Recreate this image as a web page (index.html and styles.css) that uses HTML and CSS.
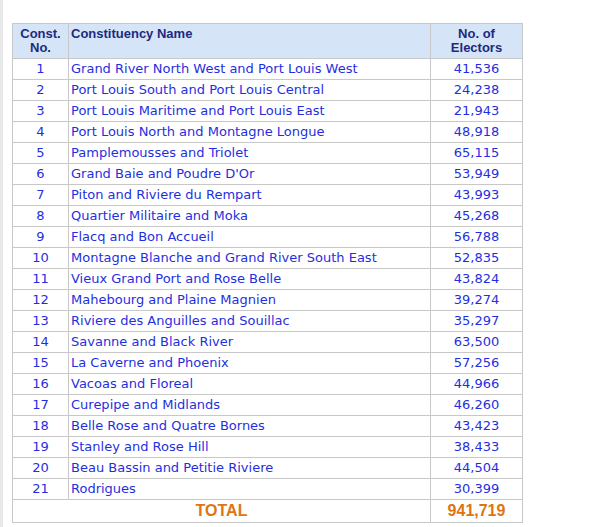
FILE: index.html
```html
<!DOCTYPE html>
<html>
<head>
<meta charset="utf-8">
<link rel="stylesheet" href="styles.css">
</head>
<body>
<div class="page">
<table class="tbl">
<thead>
<tr><th class="c1">Const.<br>No.</th><th class="c2">Constituency Name</th><th class="c3">No. of<br>Electors</th></tr>
</thead>
<tbody>
<tr><td class="n">1</td><td class="nm">Grand River North West and Port Louis West</td><td class="v">41,536</td></tr>
<tr><td class="n">2</td><td class="nm">Port Louis South and Port Louis Central</td><td class="v">24,238</td></tr>
<tr><td class="n">3</td><td class="nm">Port Louis Maritime and Port Louis East</td><td class="v">21,943</td></tr>
<tr><td class="n">4</td><td class="nm">Port Louis North and Montagne Longue</td><td class="v">48,918</td></tr>
<tr><td class="n">5</td><td class="nm">Pamplemousses and Triolet</td><td class="v">65,115</td></tr>
<tr><td class="n">6</td><td class="nm">Grand Baie and Poudre D'Or</td><td class="v">53,949</td></tr>
<tr><td class="n">7</td><td class="nm">Piton and Riviere du Rempart</td><td class="v">43,993</td></tr>
<tr><td class="n">8</td><td class="nm">Quartier Militaire and Moka</td><td class="v">45,268</td></tr>
<tr><td class="n">9</td><td class="nm">Flacq and Bon Accueil</td><td class="v">56,788</td></tr>
<tr><td class="n">10</td><td class="nm">Montagne Blanche and Grand River South East</td><td class="v">52,835</td></tr>
<tr><td class="n">11</td><td class="nm">Vieux Grand Port and Rose Belle</td><td class="v">43,824</td></tr>
<tr><td class="n">12</td><td class="nm">Mahebourg and Plaine Magnien</td><td class="v">39,274</td></tr>
<tr><td class="n">13</td><td class="nm">Riviere des Anguilles and Souillac</td><td class="v">35,297</td></tr>
<tr><td class="n">14</td><td class="nm">Savanne and Black River</td><td class="v">63,500</td></tr>
<tr><td class="n">15</td><td class="nm">La Caverne and Phoenix</td><td class="v">57,256</td></tr>
<tr><td class="n">16</td><td class="nm">Vacoas and Floreal</td><td class="v">44,966</td></tr>
<tr><td class="n">17</td><td class="nm">Curepipe and Midlands</td><td class="v">46,260</td></tr>
<tr><td class="n">18</td><td class="nm">Belle Rose and Quatre Bornes</td><td class="v">43,423</td></tr>
<tr><td class="n">19</td><td class="nm">Stanley and Rose Hill</td><td class="v">38,433</td></tr>
<tr><td class="n">20</td><td class="nm">Beau Bassin and Petitie Riviere</td><td class="v">44,504</td></tr>
<tr><td class="n">21</td><td class="nm">Rodrigues</td><td class="v">30,399</td></tr>
<tr class="total"><td colspan="2">TOTAL</td><td>941,719</td></tr>
</tbody>
</table>
</div>
</body>
</html>
```
FILE: styles.css
```css
html, body {
  margin: 0;
  padding: 0;
  background: #ffffff;
}
.page {
  border-left: 3px solid #e8e8e8;
  min-height: 527px;
  box-sizing: border-box;
  padding: 23px 0 0 9px;
}
.tbl {
  border-collapse: collapse;
  width: 510px;
  table-layout: fixed;
}
.tbl th, .tbl td {
  border: 1px solid #c8c8c8;
  padding: 0 2px;
}
.tbl th {
  background: #d6e4f7;
  color: #1c2a80;
  font-family: "Liberation Sans", Arial, sans-serif;
  font-weight: bold;
  font-size: 13px;
  line-height: 14px;
  height: 35px;
  vertical-align: top;
  padding-top: 3px;
  padding-bottom: 2px;
  box-sizing: border-box;
}
.tbl th.c1 { width: 56px; text-align: center; }
.tbl th.c2 { width: 362px; text-align: left; }
.tbl th.c3 { width: 92px; text-align: center; }
.tbl td {
  font-family: "DejaVu Sans", Verdana, sans-serif;
  font-size: 13px;
  color: #1f2fe0;
  height: 20px;
  line-height: 20px;
}
.tbl td.n, .tbl td.v { text-align: center; }
.tbl td.nm { text-align: left; }
.tbl tr.total td {
  font-family: "Liberation Sans", Arial, sans-serif;
  font-weight: bold;
  font-size: 16px;
  color: #e07410;
  text-align: center;
  height: 22px;
  line-height: 22px;
}
```
